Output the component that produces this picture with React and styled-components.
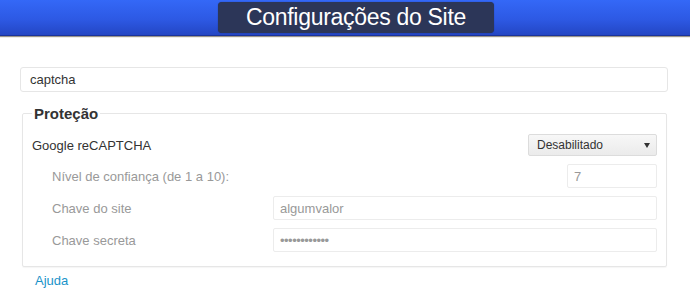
import React from 'react';
import styled, { createGlobalStyle } from 'styled-components';

const GlobalStyle = createGlobalStyle`
  html, body {
    margin: 0;
    padding: 0;
    background: #fff;
    font-family: "Liberation Sans", Arial, sans-serif;
    font-size: 13px;
    color: #333;
  }
`;

const Header = styled.header`
  height: 36px;
  background: linear-gradient(to bottom, #3468f7 0%, #2d59e4 55%, #2446c4 100%);
  border-bottom: 1px solid #1b339a;
  box-shadow: 0 1px 1px #9a948a;
  display: flex;
  justify-content: center;
  align-items: flex-start;
  padding-top: 2px;
  box-sizing: border-box;
`;

const TitleBox = styled.div`
  width: 276px;
  height: 31px;
  margin-left: 22px;
  background: #2c3658;
  border-radius: 4px;
  box-shadow: 0 0 1px rgba(0, 0, 0, 0.5);
  display: flex;
  align-items: center;
  justify-content: center;
  color: #fff;
  font-size: 23px;
  letter-spacing: -0.3px;
`;

const Content = styled.main`
  padding: 31px 22px 0 20px;
`;

const SearchInput = styled.div`
  height: 25px;
  border: 1px solid #e6e6e6;
  border-radius: 3px;
  box-sizing: border-box;
  display: flex;
  align-items: center;
  padding-left: 9px;
  color: #333;
  font-size: 13px;
`;

const Fieldset = styled.fieldset`
  margin: 13px 1px 0 2px;
  padding: 12px 9px 14px 9px;
  border: 1px solid #e6e6e6;
  border-radius: 2px;
  box-shadow: 0 1px 1px rgba(0, 0, 0, 0.04);
  min-width: 0;
`;

const Legend = styled.legend`
  padding: 0 2px;
  font-size: 15px;
  font-weight: bold;
  color: #333;
`;

const Rows = styled.div`
  display: flex;
  flex-direction: column;
  gap: 8px;
`;

const Row = styled.div`
  display: flex;
  align-items: center;
  justify-content: space-between;
  padding-left: ${p => (p.$sub ? '20px' : '0')};
`;

const MainLabel = styled.span`
  color: #333;
  font-size: 13px;
`;

const SubLabel = styled.span`
  color: #999;
  font-size: 13px;
  width: ${p => (p.$fixed ? '221px' : 'auto')};
  flex-shrink: 0;
`;

const Select = styled.div`
  width: 129px;
  height: 22px;
  box-sizing: border-box;
  border: 1px solid #dcdcdc;
  border-radius: 2px;
  background: linear-gradient(to bottom, #f7f7f7, #ebebeb);
  display: flex;
  align-items: center;
  justify-content: space-between;
  padding: 0 6px 0 8px;
  font-size: 12px;
  color: #333;
`;

const Arrow = styled.span`
  width: 0;
  height: 0;
  border-left: 3.5px solid transparent;
  border-right: 3.5px solid transparent;
  border-top: 5px solid #333;
  margin-top: 1px;
`;

const Input = styled.div`
  height: 24px;
  box-sizing: border-box;
  border: 1px solid #ececec;
  border-radius: 2px;
  background: #fff;
  display: flex;
  align-items: center;
  padding-left: 6px;
  color: #999;
  font-size: 13px;
  width: ${p => (p.$width ? p.$width : 'auto')};
  flex: ${p => (p.$width ? '0 0 auto' : '1')};
  letter-spacing: ${p => (p.$secret ? '-0.5px' : 'normal')};
`;

const Help = styled.a`
  display: inline-block;
  margin: 6px 0 0 15px;
  color: #1a93c9;
  font-size: 13px;
  text-decoration: none;
`;

export default function App() {
  return (
    <>
      <GlobalStyle />
      <Header>
        <TitleBox>Configurações do Site</TitleBox>
      </Header>
      <Content>
        <SearchInput>captcha</SearchInput>
        <Fieldset>
          <Legend>Proteção</Legend>
          <Rows>
            <Row>
              <MainLabel>Google reCAPTCHA</MainLabel>
              <Select>
                Desabilitado
                <Arrow />
              </Select>
            </Row>
            <Row $sub>
              <SubLabel>Nível de confiança (de 1 a 10):</SubLabel>
              <Input $width="90px">7</Input>
            </Row>
            <Row $sub>
              <SubLabel $fixed>Chave do site</SubLabel>
              <Input>algumvalor</Input>
            </Row>
            <Row $sub>
              <SubLabel $fixed>Chave secreta</SubLabel>
              <Input $secret>••••••••••••</Input>
            </Row>
          </Rows>
        </Fieldset>
        <Help href="#">Ajuda</Help>
      </Content>
    </>
  );
}
